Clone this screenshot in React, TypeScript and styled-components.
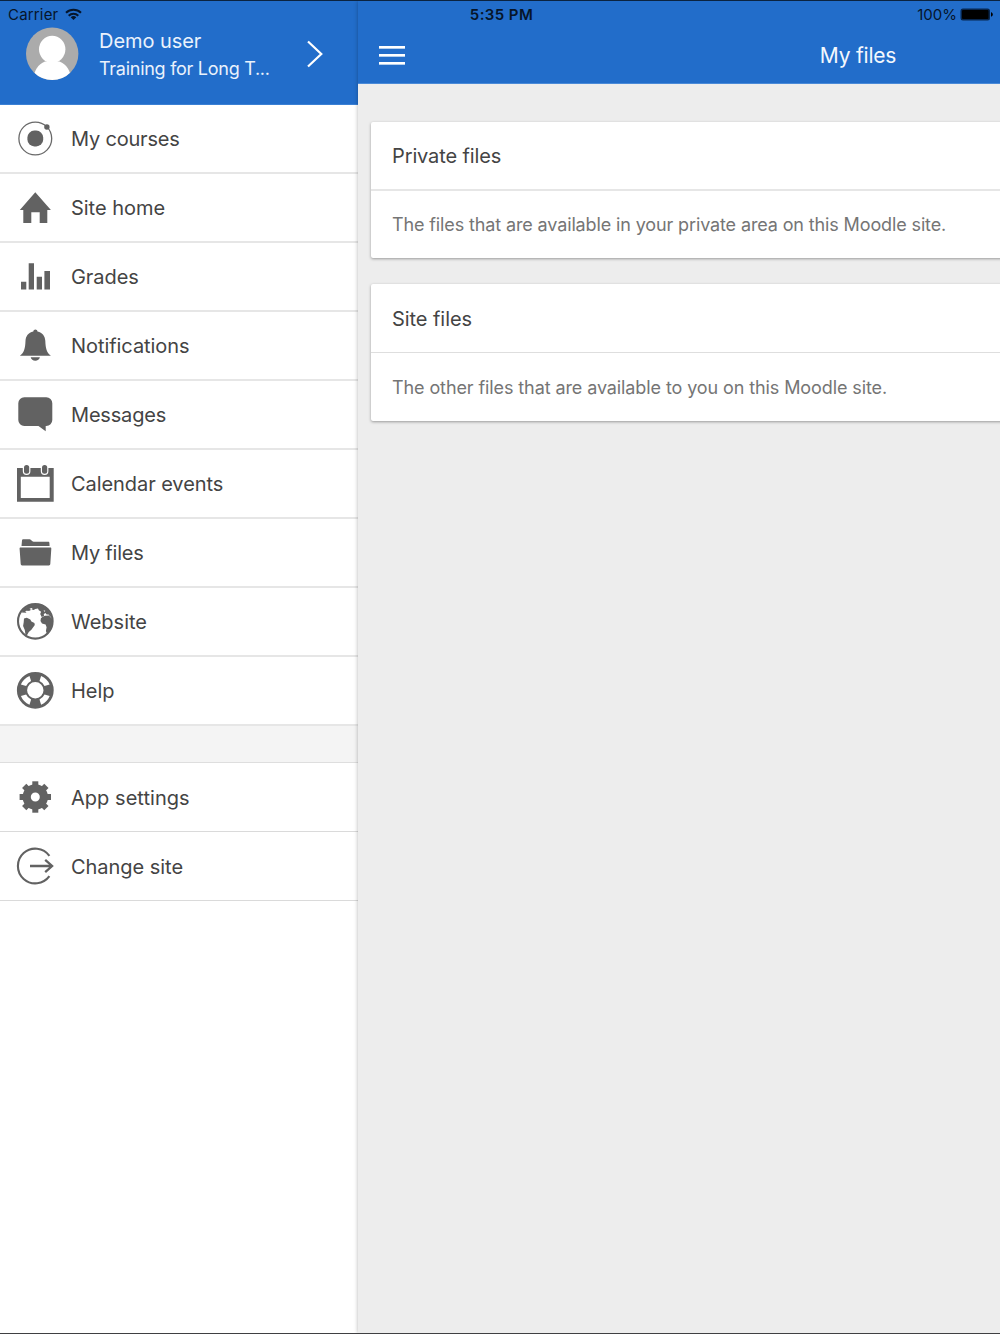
import React from "react";
import styled, { createGlobalStyle } from "styled-components";

const GlobalStyle = createGlobalStyle`
  *, *::before, *::after { box-sizing: border-box; }
  body { margin: 0; background: #ededed; }
`;

const Screen = styled.div`
  position: relative;
  display: flex;
  width: 1000px;
  height: 1334px;
  overflow: hidden;
  background: #fff;
  border-top: 1px solid #0b2340;
  border-bottom: 1px solid #3f4042;
  font-family: Inter, "Liberation Sans", sans-serif;
  color: #444;
`;

const Text = styled.span<{ $size?: number; $track?: number }>`
  display: block;
  white-space: nowrap;
  font-size: ${(p) => p.$size ?? 20}px;
  letter-spacing: ${(p) => p.$track ?? 0}px;
`;

/* Status bar */
const StatusBar = styled.div`
  position: absolute;
  inset: 0 0 auto 0;
  z-index: 3;
  height: 26px;
  padding: 0 7px 0 8px;
  display: grid;
  grid-template-columns: 1fr auto 1fr;
  align-items: center;
  color: #06152a;
`;

const StatusSide = styled.div<{ $end?: boolean }>`
  display: flex;
  align-items: center;
  gap: ${(p) => (p.$end ? 3 : 7)}px;
  justify-content: ${(p) => (p.$end ? "flex-end" : "flex-start")};
`;

const Clock = styled(Text)`
  padding-left: 2px;
  font-weight: 600;
`;

/* Side menu */
const Sidebar = styled.nav`
  flex: 0 0 358px;
  background: #fff;
`;

const Account = styled.header`
  display: flex;
  height: 104px;
  padding: 26px 34px 0 26px;
  background: #226dca;
  border-bottom: 1px solid #3b80d4;
  color: #eaf2fc;
`;

const AccountText = styled.div`
  flex: 1;
  padding-left: 20px;
  line-height: 28px;
`;

const Row = styled.div<{ $thin?: boolean }>`
  display: flex;
  align-items: flex-start;
  height: 69px;
  padding: 13px 0 0 15px;
  gap: 15px;
  border-bottom: ${(p) => (p.$thin ? "1px solid #dadada" : "2px solid #e6e6e6")};
  line-height: ${(p) => (p.$thin ? 44 : 42)}px;
`;

const RowIcon = styled.svg`
  flex: none;
  display: block;
  width: 41px;
  height: 41px;
  fill: #626262;
`;

const Divider = styled.div`
  height: 37px;
  background: #f4f4f4;
  border-bottom: 1px solid #dedede;
`;

/* Content pane, wider than the part left visible beside the open menu */
const Pane = styled.main`
  position: relative;
  z-index: 1;
  flex: 0 0 1000px;
  background: #ededed;
  box-shadow: 0 0 4px rgba(0, 0, 0, 0.3);
`;

const TopBar = styled.header`
  display: grid;
  grid-template-columns: 1fr auto 1fr;
  align-items: center;
  height: 83px;
  padding: 27px 21px 0;
  background: #226dca;
  border-bottom: 1px solid #4a8ad8;
  color: #f4f8fd;
`;

const Burger = styled.div`
  display: flex;
  flex-direction: column;
  gap: 5px;
  width: 26px;
`;

const BurgerLine = styled.i`
  height: 3px;
  background: linear-gradient(#fff 0 2px, #b4cfee 2px);
`;

const CardList = styled.div`
  display: flex;
  flex-direction: column;
  gap: 26px;
  padding: 38px 13px;
`;

const Card = styled.section`
  background: #fff;
  border-radius: 2px;
  box-shadow: 0 1px 3px rgba(0, 0, 0, 0.36);
`;

const CardHead = styled.div<{ $thin?: boolean }>`
  height: 69px;
  padding-left: 21px;
  line-height: ${(p) => (p.$thin ? 71 : 69)}px;
  border-bottom: ${(p) => (p.$thin ? "1px solid #dedede" : "2px solid #e6e6e6")};
`;

const CardBody = styled.div<{ $height: number; $line: number }>`
  height: ${(p) => p.$height}px;
  padding-left: 21px;
  line-height: ${(p) => p.$line}px;
  color: #757575;
`;

const teeth = [0, 45, 90, 135, 180, 225, 270, 315];

const icons: Record<string, React.ReactNode> = {
  courses: (
    <>
      <circle cx="20.3" cy="20.5" r="16.4" fill="none" stroke="#6a6a6a" strokeWidth="1.3" />
      <rect x="12.4" y="12.6" width="15.8" height="15.8" rx="7" />
      <circle cx="31.9" cy="9" r="2.7" />
    </>
  ),
  home: <path d="M20.3 5.300L35.900 23h-3.600v13h-7.600V25.300h-8.400V36h-8V23H4.800z" />,
  grades: <path d="M6 25.700h5.300v7.800H6zM13.700 7.300H19v26.200h-5.300zM21.700 20.700H27v12.800h-5.300zM29.400 15H35v18.500h-5.600z" />,
  bell: (
    <path d="M20.4 4.600c1.100 0 1.800.7 2.100 1.800 5 1.100 7.600 4.700 7.800 9.400.3 7.700 1.400 12 5.600 15H4.900c4.200-3 5.300-7.300 5.600-15 .2-4.700 2.800-8.300 7.800-9.400.3-1.100 1-1.800 2.100-1.800zM15.700 32.300h9.200c-.5 2.200-2.300 3.500-4.600 3.500s-4.100-1.300-4.600-3.500z" />
  ),
  chat: <path d="M9.300 3.300h22a6 6 0 0 1 6 6V26a6 6 0 0 1-6 6h-.6v5.200L23.500 32H9.300a6 6 0 0 1-6-6V9.300a6 6 0 0 1 6-6z" />,
  calendar: (
    <>
      <path fillRule="evenodd" d="M2 5h36.700v33.700H2zM5.800 13.700V35h28.900V13.700z" />
      <rect x="9" y="2" width="5.200" height="8.700" rx="2.500" stroke="#fff" strokeWidth="2.400" paintOrder="stroke" />
      <rect x="27" y="2" width="5.200" height="8.700" rx="2.500" stroke="#fff" strokeWidth="2.400" paintOrder="stroke" />
    </>
  ),
  folder: (
    <>
      <path d="M6.500 13.900L7 8.600c.1-.8.600-1.300 1.300-1.300h6.400c1.700 0 2 2.500 3.900 2.500h14.600c.8 0 1.200.5 1.200 1.200l.2 2.900z" />
      <path d="M5.700 15.400h29.500c.8 0 1.200.5 1.100 1.300l-1 15.300c-.1.900-.6 1.400-1.400 1.400H7.100c-.8 0-1.300-.5-1.400-1.400l-1.100-15.300c-.1-.8.3-1.300 1.100-1.300z" />
    </>
  ),
  earth: (
    <>
      <circle cx="20.300" cy="20.300" r="17.300" fill="none" stroke="#626262" strokeWidth="2.100" />
      <path d="M6.500 11.500C10 6 14.500 3 20.300 3c5 0 9.500 2 12.500 5.500l4.400 7.800-2.300-.8-1.300-2.100-2 .2-1.100-1.500-1.700.9.200 2-2.300.9-1.500-2.800.9-2.300-2.300-1.500-.8-1.700-2.800.3-1.400 1.200-2.200-.6-2 1.200-2.400.2-1.300 1.900z" />
      <path d="M14.500 7.800l2.200-.8 1 .9-1.600 1zM28.500 9.200l1.800.6-.5 1.200zM10 10.800l2-1.400.9.900-1.600 1z" fill="#fff" />
      <path d="M9 17.400l2.800-.7 3.500 1.800 1.100 1.900 3 1.500.4 2-3.400 4.900-2.600 2.100-1.700 3.200-1.500.3-.8-5.300-1.700-4.200.6-3.600z" />
      <path d="M27.300 16l2.500-1.200 4.100-.2 3 3 1 4.400c-.1 4.200-2.100 8.400-5.700 11.400l-1.300-3.400.7-3.800-1-2.800-3.600-.8-1.500-2.500.4-2.900z" />
    </>
  ),
  help: (
    <>
      <circle cx="20.300" cy="20.300" r="13.300" fill="none" stroke="#626262" strokeWidth="10.200" />
      <g fill="#fff">
        {[0, 90, 180, 270].map((a) => (
          <path key={a} transform={`rotate(${a} 20.300 20.300)`} d="M24.500 11.100L26.100 5.900a15.600 15.600 0 0 1 8.600 8.600L29.500 16.100a10.200 10.200 0 0 0-5-5z" />
        ))}
      </g>
    </>
  ),
  gear: (
    <>
      {teeth.map((a) => (
        <path key={a} transform={`rotate(${a} 20.300 21)`} d="M17.300 5.300h6v5h-6z" />
      ))}
      <circle cx="20.300" cy="21" r="8.600" fill="none" stroke="#626262" strokeWidth="8.200" />
    </>
  ),
  logout: (
    <g fill="none" stroke="#626262" strokeWidth="2.100">
      <path d="M34.400 10.800a17.400 17.400 0 1 0 0 20.400" />
      <path d="M15 21h22M30.200 14.800l6.900 6.200-6.900 6.200" strokeWidth="2.300" />
    </g>
  ),
};

interface Item {
  icon: string;
  label: string;
  track?: number;
}

const siteItems: Item[] = [
  { icon: "courses", label: "My courses", track: -0.2 },
  { icon: "home", label: "Site home", track: -0.03 },
  { icon: "grades", label: "Grades", track: -0.05 },
  { icon: "bell", label: "Notifications", track: -0.06 },
  { icon: "chat", label: "Messages", track: -0.18 },
  { icon: "calendar", label: "Calendar events", track: -0.07 },
  { icon: "folder", label: "My files", track: -0.22 },
  { icon: "earth", label: "Website" },
  { icon: "help", label: "Help" },
];

const appItems: Item[] = [
  { icon: "gear", label: "App settings", track: 0.04 },
  { icon: "logout", label: "Change site", track: -0.04 },
];

const MenuRow = ({ item, thin }: { item: Item; thin?: boolean }) => (
  <Row $thin={thin}>
    <RowIcon viewBox="0 0 41 41">{icons[item.icon]}</RowIcon>
    <Text $track={item.track}>{item.label}</Text>
  </Row>
);

export default function App() {
  return (
    <>
      <GlobalStyle />
      <Screen>
        <StatusBar>
          <StatusSide>
            <Text $size={15} $track={0.17}>Carrier</Text>
            <svg width="17" height="13" viewBox="0 0 17 13" fill="none" stroke="#06152a" strokeWidth="2">
              <path d="M1 4.800a10.800 10.800 0 0 1 15 0M3.700 7.700a6.800 6.800 0 0 1 9.600 0" />
              <path d="M8.500 12L5.700 9.300a4 4 0 0 1 5.600 0z" fill="#06152a" stroke="none" />
            </svg>
          </StatusSide>
          <Clock $size={15} $track={0.4}>5:35 PM</Clock>
          <StatusSide $end>
            <Text $size={15}>100%</Text>
            <svg width="33" height="13" viewBox="0 0 33 13">
              <rect x="0.500" y="0.500" width="29.500" height="12" rx="2.500" fill="#07264f" />
              <rect x="2" y="2" width="26.500" height="9" rx="1" fill="#000" />
              <path d="M31 4.300c1.300.4 1.800 1.200 1.800 2.200s-.5 1.800-1.800 2.200z" fill="#000" />
            </svg>
          </StatusSide>
        </StatusBar>

        <Sidebar>
          <Account>
            <svg width="53" height="53" viewBox="0 0 53 53">
              <defs>
                <clipPath id="avatar">
                  <circle cx="26.200" cy="26.800" r="26.200" />
                </clipPath>
              </defs>
              <g clipPath="url(#avatar)">
                <rect width="53" height="53" fill="#ababab" />
                <ellipse cx="26.200" cy="22.300" rx="13.200" ry="13.600" fill="#fff" />
                <path d="M7 53c1-9 5-16 12-18.500h14.500c7 2.500 11 9.500 12 18.500z" fill="#fff" />
              </g>
            </svg>
            <AccountText>
              <Text $track={-0.05}>Demo user</Text>
              <Text $size={18} $track={-0.27}>Training for Long T...</Text>
            </AccountText>
            <svg width="18" height="53" viewBox="0 0 18 53" fill="none" stroke="#fff" strokeWidth="2.200">
              <path d="M2 14.500L15.300 27 2 39.500" />
            </svg>
          </Account>
          {siteItems.map((item) => (
            <MenuRow key={item.label} item={item} />
          ))}
          <Divider />
          {appItems.map((item) => (
            <MenuRow key={item.label} item={item} thin />
          ))}
        </Sidebar>

        <Pane>
          <TopBar>
            <Burger>
              <BurgerLine />
              <BurgerLine />
              <BurgerLine />
            </Burger>
            <Text $size={21} $track={-0.2}>My files</Text>
          </TopBar>
          <CardList>
            <Card>
              <CardHead>
                <Text $track={-0.12}>Private files</Text>
              </CardHead>
              <CardBody $height={67} $line={67}>
                <Text $size={18} $track={-0.128}>The files that are available in your private area on this Moodle site.</Text>
              </CardBody>
            </Card>
            <Card>
              <CardHead $thin>
                <Text $track={-0.06}>Site files</Text>
              </CardHead>
              <CardBody $height={68} $line={70}>
                <Text $size={18} $track={-0.1}>The other files that are available to you on this Moodle site.</Text>
              </CardBody>
            </Card>
          </CardList>
        </Pane>
      </Screen>
    </>
  );
}
